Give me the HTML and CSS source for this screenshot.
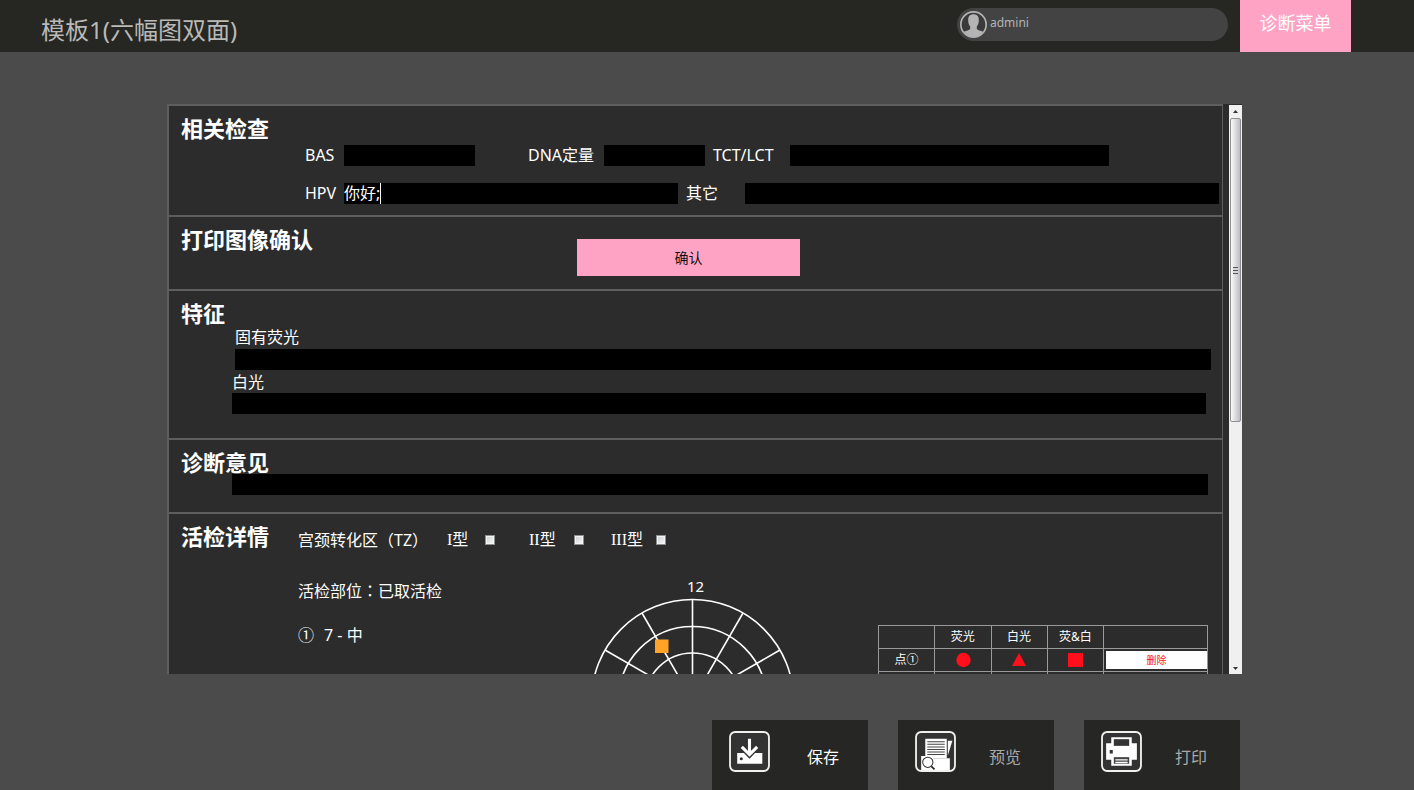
FILE: index.html
```html
<!DOCTYPE html>
<html lang="zh-CN">
<head>
<meta charset="utf-8">
<meta name="viewport" content="width=device-width, initial-scale=1">
<title>模板1(六幅图双面)</title>
<link rel="stylesheet" href="styles.css">
</head>
<body>
<header class="topbar">
  <h1 class="topbar-title">模板1(六幅图双面)</h1>
  <div class="user">
    <svg class="avatar" viewBox="0 0 26 26" aria-hidden="true">
      <circle cx="13" cy="13" r="12.2" fill="#3a3a3a" stroke="#b4b4b4" stroke-width="1.6"/>
      <path d="M13 3.2c3.4 0 5.2 2.1 5.1 5.4 0 2.7-.6 4.9-1.9 6.4v2.3c1 1.2 3.6 1.6 6 2.7A12 12 0 0 1 13 25 12 12 0 0 1 3.8 20c2.400-1.100 5-1.500 6-2.700V15C8.500 13.500 7.900 11.300 7.900 8.600 7.800 5.300 9.600 3.200 13 3.200z" fill="#b4b4b4"/>
    </svg>
    <span class="user-name">admini</span>
  </div>
  <button class="menu-button" type="button">诊断菜单</button>
</header>

<main class="main">
  <form class="panel">
    <div class="sections">
      <section class="section exams">
        <h2 class="heading">相关检查</h2>
        <div class="exam-row exam-row-first">
          <label for="bas">BAS</label>
          <input class="field" id="bas" type="text">
          <label class="label-far" for="dna">DNA定量</label>
          <input class="field" id="dna" type="text">
          <label class="label-near" for="tct">TCT/LCT</label>
          <input class="field" id="tct" type="text">
        </div>
        <div class="exam-row exam-row-second">
          <label for="hpv">HPV</label>
          <div class="field-wrap">
            <input class="field" id="hpv" type="text" value="你好;">
            <span class="caret"></span>
          </div>
          <label class="label-near" for="other">其它</label>
          <input class="field" id="other" type="text">
        </div>
      </section>

      <section class="section confirm">
        <h2 class="heading confirm-heading">打印图像确认</h2>
        <button class="confirm-button" type="button">确认</button>
      </section>

      <section class="section features">
        <h2 class="heading">特征</h2>
        <div class="feature feature-fluor">
          <label for="fluor">固有荧光</label>
          <input class="field" id="fluor" type="text">
        </div>
        <div class="feature feature-white">
          <label for="white">白光</label>
          <input class="field" id="white" type="text">
        </div>
      </section>

      <section class="section opinion">
        <h2 class="heading"><label for="opinion">诊断意见</label></h2>
        <div class="opinion-body"><input class="field" id="opinion" type="text"></div>
      </section>

      <section class="section biopsy">
        <h2 class="heading biopsy-heading">活检详情</h2>
        <div class="biopsy-body">
          <div class="zone">
            <span class="zone-title">宫颈转化区<span class="centered-mark">（</span>TZ<span class="centered-mark">）</span></span>
            <label class="zone-type zone-one" for="t1"><span class="numeral">I</span>型</label><input class="tick" id="t1" type="checkbox">
            <label class="zone-type zone-two" for="t2"><span class="numeral">II</span>型</label><input class="tick" id="t2" type="checkbox">
            <label class="zone-type zone-three" for="t3"><span class="numeral">III</span>型</label><input class="tick" id="t3" type="checkbox">
          </div>
          <div class="biopsy-grid">
            <div class="findings">
              <p>活检部位<span class="centered-mark" lang="zh-TW">：</span>已取活检</p>
              <p class="finding"><span>①</span><span>7 - 中</span></p>
            </div>
            <svg class="clock" viewBox="0 0 206 230" role="img" aria-label="活检部位">
              <text x="105.500" y="16" text-anchor="middle">12</text>
              <g fill="none" stroke="#fff" stroke-width="1.600">
                <circle cx="102.500" cy="124.500" r="101"/>
                <circle cx="102.500" cy="124.500" r="74"/>
                <circle cx="102.500" cy="124.500" r="47.500"/>
                <path d="M102.500 23.500v202M1.500 124.500h202M52 37l101 175M153 37L52 212M15 74l175 101M190 74L15 175"/>
              </g>
              <rect x="65" y="63.500" width="13.500" height="13.500" fill="#ffa328"/>
            </svg>
            <table class="points">
              <thead>
                <tr><th></th><th>荧光</th><th>白光</th><th>荧&amp;白</th><th class="action-col"></th></tr>
              </thead>
              <tbody>
                <tr>
                  <td>点①</td>
                  <td><svg class="mark" viewBox="0 0 16 16"><circle cx="8.500" cy="8" r="7.200"/></svg></td>
                  <td><svg class="mark" viewBox="0 0 16 16"><path d="M8 1l7 13H1z"/></svg></td>
                  <td><svg class="mark" viewBox="0 0 16 16"><path d="M1 1h15v14H1z"/></svg></td>
                  <td class="action"><button class="delete" type="button">删除</button></td>
                </tr>
                <tr><td></td><td></td><td></td><td></td><td></td></tr>
              </tbody>
            </table>
          </div>
        </div>
      </section>
    </div>
    <div class="scrollbar" aria-hidden="true">
      <svg class="arrow" viewBox="0 0 13 13"><path d="M4 8l2.500-3L9 8z" fill="#333"/></svg>
      <div class="track">
        <div class="thumb"><span class="grip"></span></div>
      </div>
      <svg class="arrow" viewBox="0 0 13 13"><path d="M4 6h5L6.500 9z" fill="#333"/></svg>
    </div>
  </form>
</main>

<footer class="actions">
  <button class="action-button action-save" type="button">
    <svg class="action-icon" viewBox="0 0 40 40" aria-hidden="true">
      <rect x="1" y="1" width="38" height="38" rx="5" fill="#333" stroke="#f0f0ec" stroke-width="1.800"/>
      <path d="M8 21.500h7l5 5 5-5h7.500V32H8z" fill="#fff"/>
      <circle cx="12" cy="27" r="1.500" fill="#333"/>
      <path d="M20 7.500v16M12.500 15.500l7.500 8 7.500-8" fill="none" stroke="#333" stroke-width="5"/>
      <path d="M20 7.500v16M12.500 15.500l7.500 7.500 7.500-7.500" fill="none" stroke="#fff" stroke-width="3"/>
    </svg>
    <span>保存</span>
  </button>
  <button class="action-button" type="button">
    <svg class="action-icon" viewBox="0 0 40 40" aria-hidden="true">
      <rect x="1" y="1" width="38" height="38" rx="5" fill="#333" stroke="#f0f0ec" stroke-width="1.800"/>
      <path d="M10 7.500h21v19H10zM32 9.500h4.500L32 24z" fill="#fff"/>
      <path d="M12 10.500h17M12 13h17M12 15.500h17M12 18h17M12 20.500h17M12 23h17" stroke="#444" stroke-width="1"/>
      <path d="M6 24.500h9l3 2h16V38H6z" fill="#fff"/>
      <circle cx="12.500" cy="30.500" r="5" fill="#fff" stroke="#333" stroke-width="1"/>
      <path d="M16 34.500l3 3" stroke="#222" stroke-width="1.600"/>
    </svg>
    <span>预览</span>
  </button>
  <button class="action-button" type="button">
    <svg class="action-icon" viewBox="0 0 40 40" aria-hidden="true">
      <rect x="1" y="1" width="38" height="38" rx="5" fill="#333" stroke="#f0f0ec" stroke-width="1.800"/>
      <path d="M10 6h20v6h5v16h-5v6H10v-6H5V12h5z" fill="#fff"/>
      <path d="M12.500 8h15v6.500h-15z" fill="#333"/>
      <path d="M8.500 18.500h3V22h-3z" fill="#333"/>
      <path d="M12.500 25.500h15V32h-15z" fill="#444"/>
      <path d="M14 27.500h12v1.200H14zM14 30h12v1.500H14z" fill="#fff"/>
    </svg>
    <span>打印</span>
  </button>
</footer>
</body>
</html>
```
FILE: styles.css
```css
* {
  box-sizing: border-box;
}

body {
  margin: 0;
  height: 100vh;
  display: flex;
  flex-direction: column;
  background: #4b4b4b;
  color: #fff;
  font-family: "Noto Sans", "Noto Sans CJK SC", sans-serif;
  font-size: 16px;
  line-height: 24px;
}

h1, h2, p {
  margin: 0;
}

button, input {
  margin: 0;
  padding: 0;
  border: 0;
  border-radius: 0;
  font: inherit;
  color: inherit;
}

/* Top bar */
.topbar {
  display: flex;
  align-items: flex-start;
  height: 52px;
  padding: 0 63px 0 41px;
  background: #262622;
}

.topbar-title {
  margin-right: auto;
  padding-top: 14px;
  color: #b9b9b7;
  font-size: 24px;
  font-weight: 400;
  line-height: 32px;
}

.user {
  display: flex;
  align-items: flex-start;
  gap: 3px;
  width: 271px;
  height: 33px;
  margin: 8px 12px 0 0;
  padding: 3px;
  border-radius: 17px;
  background: #434343;
}

.avatar {
  width: 27px;
  height: 27px;
}

.user-name {
  color: #b4b4b4;
  font-size: 12px;
}

.menu-button {
  width: 111px;
  height: 52px;
  padding-bottom: 6px;
  background: #ffa3c5;
  font-size: 18px;
}

/* Form panel */
.main {
  flex: 1;
  display: flex;
  min-height: 0;
  padding: 52px 172px 46px 167px;
}

.panel {
  flex: 1;
  display: flex;
  min-width: 0;
  overflow: hidden;
  background: #2c2c2c;
}

.sections {
  flex: 1;
  min-width: 0;
  margin-right: 6px;
  border: solid #5e5e5e;
  border-width: 0 1px 0 2px;
}

.section {
  padding: 10px 11px 0 12px;
  border-top: 2px solid #5e5e5e;
}

.heading {
  font-size: 22px;
  font-weight: 700;
  line-height: 24px;
}

.field {
  display: block;
  width: 100%;
  min-width: 0;
  height: 21px;
  background: #000;
}

.exams {
  padding-right: 3px;
  padding-bottom: 13px;
}

.exam-row {
  display: grid;
  align-items: center;
  height: 21px;
  padding-left: 124px;
}

.exam-row-first {
  grid-template-columns: 39px 131fr 129px 101fr 85px 319fr;
  margin: 3px 110px 17px 0;
}

.exam-row-second {
  grid-template-columns: 39px 334fr 67px 474fr;
}

.label-far {
  padding-left: 53px;
}

.label-near {
  padding-left: 8px;
}

.field-wrap {
  position: relative;
}

.caret {
  position: absolute;
  top: 0;
  left: 36px;
  width: 1px;
  height: 21px;
  background: #fff;
}

.confirm {
  display: flex;
  padding-bottom: 13px;
}

.confirm-heading {
  flex: 0 0 396px;
}

.confirm-button {
  width: 223px;
  height: 37px;
  margin-top: 12px;
  background: #ffa3c5;
  color: #111;
  font-size: 14px;
}

.features {
  padding-bottom: 24px;
}

.feature label {
  display: block;
}

.feature-fluor {
  margin-left: 54px;
}

.feature-white {
  margin: 0 5px 0 51px;
  padding-top: 1px;
}

.feature-white label {
  line-height: 22px;
}

.opinion {
  padding-bottom: 17px;
}

.opinion-body {
  padding: 0 3px 0 51px;
}

/* Biopsy */
.biopsy {
  display: flex;
}

.biopsy-heading {
  flex: 0 0 117px;
}

.biopsy-body {
  flex: 1;
  min-width: 0;
  padding-top: 3px;
}

.zone {
  display: flex;
  align-items: center;
}

.zone-title {
  width: 149px;
}

.zone-type {
  white-space: nowrap;
}

.zone-one {
  width: 38px;
}

.zone-two {
  width: 45px;
  margin-left: 34px;
}

.zone-three {
  width: 45px;
  margin-left: 27px;
}

.numeral {
  font-family: "Liberation Serif", serif;
}

.centered-mark {
  font-family: "Noto Sans CJK TC", sans-serif;
}

.tick {
  appearance: none;
  width: 10px;
  height: 10px;
  border: 1px solid #8e8f8f;
  background: linear-gradient(135deg, #c9ccd0, #fafafa);
  box-shadow: inset 0 0 0 1px #f4f4f4;
}

.biopsy-grid {
  display: flex;
  align-items: flex-start;
}

.findings {
  flex: 0 0 292px;
  display: grid;
  gap: 20px;
  padding-top: 26px;
}

.finding {
  display: flex;
  gap: 10px;
}

.clock {
  flex: none;
  width: 206px;
  height: 230px;
  margin-top: 24px;
}

.clock text {
  fill: #fff;
  font-size: 15px;
}

.points {
  flex: 1;
  table-layout: fixed;
  width: 100%;
  margin: 73px 3px 0 82px;
  border-collapse: collapse;
  font-size: 12px;
  line-height: 22px;
  text-align: center;
}

.points th,
.points td {
  height: 23px;
  padding: 0;
  border: 1px solid #9a9a9a;
  font-weight: 400;
}

.points .action-col {
  width: 104px;
}

.mark {
  display: block;
  width: 16px;
  height: 16px;
  margin: 0 auto;
  fill: #ff0f1b;
}

.points .action {
  padding-left: 2px;
}

.delete {
  display: block;
  width: 100%;
  height: 18px;
  background: #fff;
  color: #ff0f1b;
  font-size: 10px;
  line-height: 18px;
}

/* Scrollbar */
.scrollbar {
  display: flex;
  flex-direction: column;
  width: 13px;
  margin-top: 1px;
  background: #f0f0f0;
}

.arrow {
  display: block;
  width: 13px;
  height: 13px;
}

.track {
  flex: 1;
}

.thumb {
  display: flex;
  align-items: center;
  justify-content: center;
  height: 56%;
  margin: 0 1px;
  border: 1px solid #8f8f93;
  border-radius: 2px;
  background: linear-gradient(90deg, #fafafa, #dcdce0 50%, #bcbcc4);
}

.grip {
  width: 5px;
  height: 7px;
  background: repeating-linear-gradient(#555 0 1px, #d8d8dc 1px 3px);
}

/* Bottom actions */
.actions {
  display: flex;
  justify-content: flex-end;
  gap: 30px;
  padding-right: 174px;
}

.action-button {
  display: flex;
  align-items: flex-start;
  gap: 33px;
  width: 156px;
  height: 70px;
  padding: 11px 0 0 17px;
  background: #262624;
  color: #a9a9a9;
}

.action-button span {
  padding-top: 14px;
}

.action-save {
  gap: 37px;
  color: #fff;
}

.action-icon {
  width: 41px;
  height: 41px;
}
```
